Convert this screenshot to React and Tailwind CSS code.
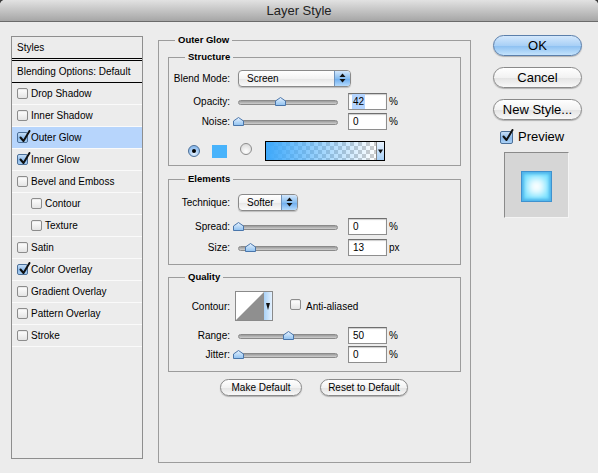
import React from 'react';

const styleRows = [
  { label: 'Drop Shadow', on: false },
  { label: 'Inner Shadow', on: false },
  { label: 'Outer Glow', on: true, active: true },
  { label: 'Inner Glow', on: true },
  { label: 'Bevel and Emboss', on: false },
  { label: 'Contour', on: false, indent: true },
  { label: 'Texture', on: false, indent: true },
  { label: 'Satin', on: false },
  { label: 'Color Overlay', on: true },
  { label: 'Gradient Overlay', on: false },
  { label: 'Pattern Overlay', on: false },
  { label: 'Stroke', on: false },
];

function Check({ on, size = 'sm' }) {
  const box = size === 'lg' ? 'h-[13px] w-[13px]' : 'h-[11px] w-[11px]';
  return (
    <span
      className={`relative inline-flex shrink-0 rounded-[2px] border ${box} ${
        on
          ? 'border-[#4b6f98] bg-[linear-gradient(#c6def7,#8dbbec_55%,#a9d0f5)]'
          : 'border-[#8c8c8c] bg-[linear-gradient(#ffffff,#e4e4e4)] shadow-[inset_0_1px_1px_rgba(0,0,0,0.08)]'
      }`}
    >
      {on && (
        <svg className="absolute left-[1px] top-[-3px]" width="12" height="13" viewBox="0 0 12 13">
          <path d="M1.5 7.5 L4.5 11 L10.5 1" fill="none" stroke="#111" strokeWidth="2" strokeLinecap="round" strokeLinejoin="round" />
        </svg>
      )}
    </span>
  );
}

function Radio({ on }) {
  return (
    <span
      className={`inline-flex h-[12px] w-[12px] shrink-0 items-center justify-center rounded-full border ${
        on
          ? 'border-[#4b6f98] bg-[radial-gradient(circle_at_50%_75%,#e4f1ff,#8dbbec_70%)]'
          : 'border-[#8c8c8c] bg-[radial-gradient(circle_at_50%_75%,#ffffff,#dcdcdc_80%)]'
      }`}
    >
      {on && <span className="h-[4px] w-[4px] rounded-full bg-black" />}
    </span>
  );
}

function Thumb() {
  return (
    <svg width="11" height="9" viewBox="0 0 11 9">
      <defs>
        <linearGradient id="th" x1="0" y1="0" x2="0" y2="1">
          <stop offset="0" stopColor="#e8f3ff" />
          <stop offset="1" stopColor="#8ec0ef" />
        </linearGradient>
      </defs>
      <path d="M0.5 4 L5.5 0.5 L10.5 4 V8.5 H0.5 Z" fill="url(#th)" stroke="#4a76ab" strokeWidth="1" />
    </svg>
  );
}

function Slider({ value }) {
  return (
    <div className="relative ml-[3px] h-[12px] w-[110px] shrink-0">
      <div className="absolute left-[5px] right-[5px] top-[5px] h-[5px] rounded-full border border-[#8a8a8a] bg-[linear-gradient(#9a9a9a,#cfcfcf)]" />
      <div className="absolute top-[2px]" style={{ left: value }}>
        <Thumb />
      </div>
    </div>
  );
}

function Field({ value, selected, unit = '%' }) {
  return (
    <>
      <div className="ml-[5px] flex h-[17px] w-[39px] shrink-0 items-center border border-[#8e8e8e] border-t-[#6f6f6f] bg-white pl-[3px] shadow-[inset_0_1px_1px_rgba(0,0,0,0.2)]">
        <span className={selected ? 'bg-[#b5d5ff] px-[1px]' : 'px-[1px]'}>{value}</span>
      </div>
      <span className="ml-[2px] text-[10px]">{unit}</span>
    </>
  );
}

function Arrows() {
  return (
    <svg width="7" height="10" viewBox="0 0 7 10">
      <path d="M3.5 0.5 L6.5 4 H0.5 Z" fill="#111" />
      <path d="M3.5 9.5 L6.5 6 H0.5 Z" fill="#111" />
    </svg>
  );
}

function Popup({ label, width }) {
  return (
    <div
      className={`ml-[8px] flex h-[17px] shrink-0 items-center overflow-hidden rounded-[4px] border border-[#8a8a8a] bg-[linear-gradient(#ffffff,#f3f3f3_50%,#e6e6e6_51%,#fafafa)] shadow-[0_1px_1px_rgba(0,0,0,0.2)] ${width}`}
    >
      <span className="flex-1 pl-[8px]">{label}</span>
      <span className="flex h-full w-[16px] items-center justify-center border-l border-[#6f93bd] bg-[linear-gradient(#d3e7fc,#86bdf1_50%,#6aabee_51%,#b4dafc)]">
        <Arrows />
      </span>
    </div>
  );
}

function SliderRow({ label, value, field, selected, unit, className }) {
  return (
    <div className={`flex h-[18px] items-center ${className}`}>
      <span className="w-[61px] shrink-0 text-right">{label}</span>
      <Slider value={value} />
      <Field value={field} selected={selected} unit={unit} />
    </div>
  );
}

function Group({ title, className, children }) {
  return (
    <fieldset className={`border border-[#9c9c9c] ${className}`}>
      <legend className="ml-[16px] px-[3px] text-[9.5px] font-bold leading-[12px]">{title}</legend>
      {children}
    </fieldset>
  );
}

function AquaButton({ children, primary, className }) {
  return (
    <button
      className={`flex items-center justify-center rounded-full border shadow-[0_1px_1px_rgba(0,0,0,0.25)] ${
        primary
          ? 'border-[#5b7fab] bg-[linear-gradient(#d4e8fc,#a9d0f6_50%,#8bbff1_51%,#c4e3fc)]'
          : 'border-[#8a8a8a] bg-[linear-gradient(#ffffff,#f2f2f2_50%,#e3e3e3_51%,#f8f8f8)]'
      } ${className}`}
    >
      {children}
    </button>
  );
}

export default function App() {
  return (
    <div className="h-[473px] w-[598px] bg-[#3a3a3a] font-['Liberation_Sans',Arial,sans-serif] text-[10px] text-black">
      <div className="flex h-full flex-col overflow-hidden rounded-t-[5px] bg-[#ececec]">
        {/* title bar */}
        <div className="flex h-[22px] shrink-0 items-center justify-center border-b border-[#6b6b6b] bg-[linear-gradient(#e2e2e2,#c4c4c4_50%,#a6a6a6)] text-[13px] text-[#222]">
          Layer Style
        </div>

        <div className="flex items-start">
          {/* styles list */}
          <div className="ml-[11px] mt-[14px] h-[423px] w-[132px] shrink-0 border border-[#8e8e8e]">
            <div className="flex h-[24px] items-center border-b-[3px] border-double border-black pl-[5px]">Styles</div>
            <div className="flex h-[22px] items-center border-b border-black pl-[5px]">Blending Options: Default</div>
            {styleRows.map((r) => (
              <div
                key={r.label}
                className={`flex h-[22px] items-center gap-[3px] border-b border-[#fafafa] ${r.indent ? 'pl-[19px]' : 'pl-[5px]'} ${
                  r.active ? 'bg-[#b7d5fc]' : ''
                }`}
              >
                <Check on={r.on} />
                <span>{r.label}</span>
              </div>
            ))}
          </div>

          {/* settings */}
          <fieldset className="ml-[15px] mt-[12px] h-[429px] w-[313px] shrink-0 border border-[#9c9c9c] px-[9px]">
            <legend className="ml-[7px] px-[3px] text-[9.5px] font-bold leading-[12px]">Outer Glow</legend>

            <Group title="Structure" className="mt-[5px] pb-[4px]">
              <div className="mt-[6px] flex h-[18px] items-center">
                <span className="w-[61px] shrink-0 text-right">Blend Mode:</span>
                <Popup label="Screen" width="w-[113px]" />
              </div>
              <SliderRow label="Opacity:" value={42} field="42" selected className="mt-[5px]" />
              <SliderRow label="Noise:" value={0} field="0" className="mt-[2px]" />
              <div className="mt-[11px] flex h-[20px] items-center pl-[19px]">
                <Radio on />
                <span className="ml-[12px] h-[13px] w-[15px] shrink-0 bg-[#48b3fb]" />
                <span className="ml-[13px]">
                  <Radio />
                </span>
                <div className="ml-[13px] flex h-[20px] w-[120px] shrink-0 border border-black">
                  <div className="flex-1 bg-[linear-gradient(to_right,#3ea9fb,rgba(62,169,251,0)),repeating-conic-gradient(#cccccc_0_25%,#ffffff_0_50%)] bg-[length:100%_100%,8px_8px]" />
                  <div className="flex w-[8px] items-center justify-center border-l border-[#888] bg-[linear-gradient(#e9f3fe,#a8d0f6)]">
                    <svg width="5" height="5" viewBox="0 0 5 5">
                      <path d="M0 0.5 H5 L2.5 4.5 Z" fill="#111" />
                    </svg>
                  </div>
                </div>
              </div>
            </Group>

            <Group title="Elements" className="mt-[7px] pb-[8px]">
              <div className="mt-[8px] flex h-[18px] items-center">
                <span className="w-[61px] shrink-0 text-right">Technique:</span>
                <Popup label="Softer" width="w-[60px]" />
              </div>
              <SliderRow label="Spread:" value={0} field="0" className="mt-[6px]" />
              <SliderRow label="Size:" value={12} field="13" unit="px" className="mt-[3px]" />
            </Group>

            <Group title="Quality" className="mt-[6px] pb-[8px]">
              <div className="mt-[8px] flex h-[30px] items-center">
                <span className="w-[61px] shrink-0 text-right">Contour:</span>
                <div className="ml-[5px] flex h-[30px] w-[38px] shrink-0 border border-[#8a8a8a] bg-white">
                  <svg width="28" height="28" viewBox="0 0 28 28">
                    <path d="M0 28 L28 0 V28 Z" fill="#8f8f8f" />
                  </svg>
                  <div className="flex flex-1 items-center justify-center bg-[linear-gradient(to_right,#a9d2f8,#e4f1fe)]">
                    <svg width="4" height="7" viewBox="0 0 4 7">
                      <path d="M0 0 H4 L2 7 Z" fill="#111" />
                    </svg>
                  </div>
                </div>
                <span className="ml-[17px]">
                  <Check on={false} />
                </span>
                <span className="ml-[5px]">Anti-aliased</span>
              </div>
              <SliderRow label="Range:" value={50} field="50" className="mt-[5px]" />
              <SliderRow label="Jitter:" value={0} field="0" className="mt-[1px]" />
            </Group>

            <div className="mt-[7px] flex justify-center gap-[18px] pr-[1px]">
              <AquaButton className="h-[17px] w-[82px] text-[10px]">Make Default</AquaButton>
              <AquaButton className="h-[17px] w-[88px] text-[10px]">Reset to Default</AquaButton>
            </div>
          </fieldset>

          {/* buttons + preview */}
          <div className="ml-[22px] mt-[13px] flex w-[89px] shrink-0 flex-col text-[13px]">
            <AquaButton primary className="h-[21px] w-[89px]">OK</AquaButton>
            <AquaButton className="mt-[11px] h-[21px] w-[89px]">Cancel</AquaButton>
            <AquaButton className="mt-[11px] h-[21px] w-[89px]">New Style...</AquaButton>
            <div className="mt-[10px] flex h-[14px] items-center pl-[7px]">
              <Check on size="lg" />
              <span className="ml-[5px]">Preview</span>
            </div>
            <div className="ml-[11px] mt-[8px] flex h-[66px] w-[65px] items-center justify-center border border-[#8a8a8a] border-b-[#f4f4f4] border-r-[#f4f4f4] bg-[#d6d6d6] pt-[2px]">
              <div className="h-[31px] w-[31px] bg-white shadow-[inset_0_0_0_1px_#3f92cf,inset_0_0_3px_3px_#4fb3ea,inset_0_0_9px_7px_#6fe0ff]" />
            </div>
          </div>
        </div>
      </div>
    </div>
  );
}
